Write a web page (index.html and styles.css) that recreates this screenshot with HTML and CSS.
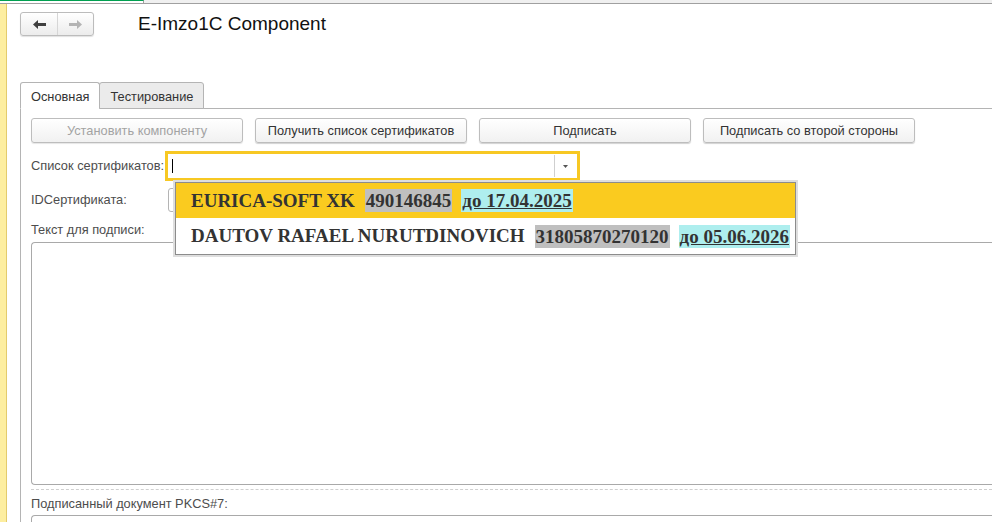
FILE: index.html
```html
<!DOCTYPE html>
<html>
<head>
    <meta charset="utf-8">
    <title>E-Imzo1C Component</title>
    <link rel="stylesheet" href="styles.css">
</head>
<body>
    <div class="topbar"><div class="topbar-tab"></div></div>

    <div class="app">
        <aside class="sidebar"></aside>

        <div class="page">
            <header class="header">
                <div class="nav">
                    <button class="nav-btn" title="Назад">
                        <svg width="13" height="9" viewBox="0 0 13 9"><path d="M0 4.5 L5 0 L5 3 L13 3 L13 6 L5 6 L5 9 Z" /></svg>
                    </button>
                    <button class="nav-btn is-off" title="Вперед">
                        <svg width="13" height="9" viewBox="0 0 13 9"><path d="M13 4.5 L8 0 L8 3 L0 3 L0 6 L8 6 L8 9 Z" /></svg>
                    </button>
                </div>
                <h1 class="title">E-Imzo1C Component</h1>
            </header>

            <div class="tabs">
                <div class="tab is-active">Основная</div>
                <div class="tab">Тестирование</div>
            </div>

            <div class="panel">
                <div class="actions">
                    <button class="btn" disabled>Установить компоненту</button>
                    <button class="btn">Получить список сертификатов</button>
                    <button class="btn">Подписать</button>
                    <button class="btn">Подписать со второй стороны</button>
                </div>

                <div class="form">
                    <label class="label">Список сертификатов:</label>
                    <div class="combo is-focused">
                        <span class="cursor"></span>
                        <span class="combo-btn">
                            <svg width="5" height="3" viewBox="0 0 5 3"><path d="M0 0 H5 L2.5 3 Z" /></svg>
                        </span>

                        <ul class="dropdown">
                            <li class="cert is-selected">
                                <span class="cert-name">EURICA-SOFT XK</span>
                                <span class="cert-inn">490146845</span>
                                <span class="cert-date">до 17.04.2025</span>
                            </li>
                            <li class="cert">
                                <span class="cert-name">DAUTOV RAFAEL NURUTDINOVICH</span>
                                <span class="cert-inn">31805870270120</span>
                                <span class="cert-date">до 05.06.2026</span>
                            </li>
                        </ul>
                    </div>

                    <label class="label">IDСертификата:</label>
                    <div class="input"></div>
                </div>

                <div class="label label-block">Текст для подписи:</div>
                <div class="textarea"></div>

                <div class="divider"></div>

                <div class="label label-block label-after-divider">Подписанный документ PKCS#7:</div>
                <div class="textarea textarea-short"></div>
            </div>
        </div>
    </div>
</body>
</html>
```

FILE: styles.css
```css
* { box-sizing: border-box; margin: 0; padding: 0; }

:root {
    --border-color: #b4b4b4;
    --label-color: #4d4d4d;
    --focus-color: #f7c823;
}

html,
body {
    height: 100%;
    overflow: hidden;
}

body {
    background: #fff;
    font-family: "Liberation Sans", Arial, sans-serif;
    font-size: 12.8px;
    color: #333;
}

.topbar {
    height: 4px;
    background: #f0f0f0;
    border-bottom: 1px solid #a0a0a0;
}

.topbar-tab {
    width: 144px;
    height: 3px;
    background: #fff;
    border-top: 1px solid #00a050;
    border-right: 1px solid #a0a0a0;
}

.app {
    display: flex;
    height: calc(100% - 4px);
}

.sidebar {
    flex: none;
    width: 7px;
    background: #fdeea0;
    border-right: 1px solid #e3cb6c;
}

.page {
    flex: 1;
    min-width: 0;
    padding-left: 13px;
}

/* header */

.header {
    display: flex;
    align-items: center;
    padding-top: 8px;
}

.nav {
    display: flex;
    height: 24px;
    border: 1px solid #bcbcbc;
    border-radius: 3px;
    background: linear-gradient(#fff, #ececec);
    box-shadow: 0 1px 1px rgba(0, 0, 0, .12);
}

.nav-btn {
    width: 36px;
    display: flex;
    align-items: center;
    justify-content: center;
    border: none;
    background: none;
    fill: #404040;
}

.nav-btn + .nav-btn {
    border-left: 1px solid #d6d6d6;
}

.nav-btn.is-off {
    fill: #b4b4b4;
}

.title {
    margin-left: 44px;
    font-size: 19px;
    font-weight: normal;
    color: #111;
    line-height: 24px;
}

/* tabs */

.tabs {
    display: flex;
    margin-top: 46px;
    margin-bottom: -1px;
    position: relative;
    z-index: 1;
}

.tab {
    height: 27px;
    padding: 6px 10px 0;
    border: 1px solid var(--border-color);
    border-radius: 3px 3px 0 0;
    background: #ebebeb;
    color: #333;
}

.tab + .tab {
    margin-left: -1px;
}

.tab.is-active {
    background: #fff;
    border-bottom-color: #fff;
}

.panel {
    border-top: 1px solid var(--border-color);
    border-left: 1px solid var(--border-color);
    padding: 9px 0 0 10px;
}

/* buttons */

.actions {
    display: flex;
    gap: 12px;
}

.btn {
    width: 212px;
    height: 25px;
    border: 1px solid #bdbdbd;
    border-radius: 3px;
    background: linear-gradient(#fff, #f1f1f1);
    box-shadow: 0 1px 1px rgba(0, 0, 0, .18);
    font: inherit;
    color: #333;
}

.btn:disabled {
    color: #a3a3a3;
    box-shadow: 0 1px 1px rgba(0, 0, 0, .1);
}

/* fields */

.form {
    display: grid;
    grid-template-columns: 137px 409px;
    grid-auto-rows: 24px;
    row-gap: 10px;
    align-items: center;
    margin-top: 11px;
}

.label {
    color: var(--label-color);
    line-height: 16px;
}

.label-block {
    margin-top: 10px;
}

.label-after-divider {
    margin-top: 6px;
}

.input,
.combo {
    height: 24px;
    border: 1px solid var(--border-color);
    border-radius: 3px;
    background: #fff;
}

.combo {
    position: relative;
    display: flex;
    align-items: center;
    justify-content: space-between;
    padding-left: 3px;
}

.combo.is-focused {
    border-color: #fff;
    box-shadow: 0 0 0 3px var(--focus-color);
    border-radius: 0;
}

.cursor {
    width: 1px;
    height: 14px;
    background: #000;
}

.combo-btn {
    width: 22px;
    height: 22px;
    display: flex;
    align-items: center;
    justify-content: center;
    border-left: 1px solid #cfcfcf;
    fill: #555;
}

/* dropdown list */

.dropdown {
    position: absolute;
    left: 6px;
    top: 27px;
    width: 621px;
    list-style: none;
    border: 1px solid #8c8c8c;
    box-shadow: 0 0 0 2px #dedede;
    background: #fff;
    z-index: 2;
}

.cert {
    display: flex;
    align-items: center;
    gap: 9px;
    height: 36px;
    padding-left: 15px;
    font-family: "Liberation Serif", "Times New Roman", serif;
    font-size: 19px;
    font-weight: bold;
    color: #333;
}

.cert.is-selected {
    height: 35px;
    background: #facb1f;
}

.cert-name {
    margin-right: 1px;
}

.cert-inn,
.cert-date {
    line-height: 23px;
    padding: 0 1px;
}

.cert-inn {
    background: #bfbfbf;
}

.cert-date {
    background: #aeeeee;
    text-decoration: underline;
}

.textarea {
    height: 243px;
    margin-top: 4px;
    border: 1px solid #a9a9a9;
    border-right: none;
    border-radius: 4px 0 0 4px;
}

.textarea-short {
    height: 8px;
    margin-top: 3px;
    border-bottom: none;
    border-radius: 4px 0 0 0;
}

.divider {
    margin-top: 4px;
    border-top: 1px dashed #cfcfcf;
}
```
